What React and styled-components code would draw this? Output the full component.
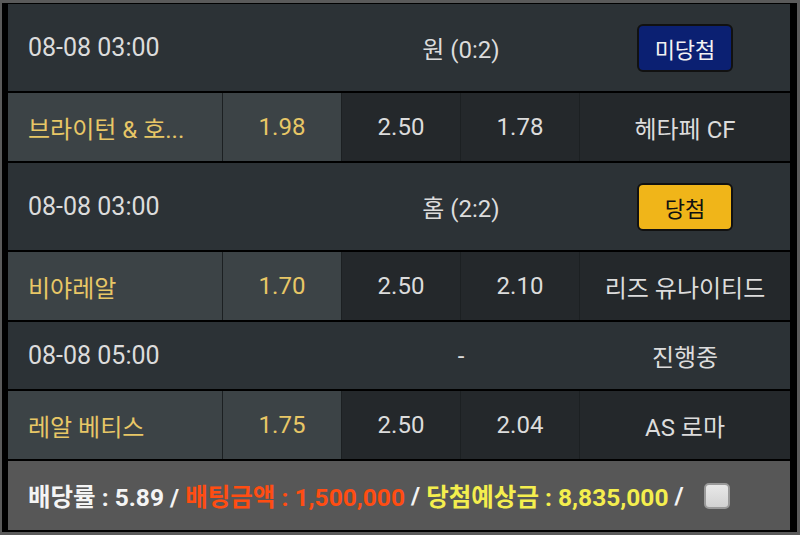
import React from "react";
import styled, { createGlobalStyle } from "styled-components";

const GlobalStyle = createGlobalStyle`
  body {
    margin: 0;
    background: #5a5a5a;
    font-family: Roboto, "Noto Sans CJK KR", sans-serif;
  }
`;

const Frame = styled.div`
  margin: 3px 3px 0 2px;
  padding: 1px 7px 2px 6px;
  background: #000;
  display: flex;
  flex-direction: column;
  gap: 2px;
`;

const InfoRow = styled.div`
  display: grid;
  grid-template-columns: 334px 238px 1fr;
  height: ${(p) => (p.$tall ? 87 : 67)}px;
  background: #2c3236;
  color: #dcdcdc;
  font-size: 24px;
  align-items: center;
`;

const DateCell = styled.div`
  padding-left: 20px;
  font-size: 25px;
`;

const ResultCell = styled.div`
  text-align: center;
`;

const StatusCell = styled.div`
  display: flex;
  justify-content: center;
  align-items: center;
`;

const Badge = styled.div`
  width: 96px;
  height: 48px;
  box-sizing: border-box;
  border: 2px solid #111;
  border-radius: 6px;
  display: flex;
  align-items: center;
  justify-content: center;
  font-size: 22px;
  background: ${(p) => (p.$win ? "#f0b519" : "#0b2072")};
  color: ${(p) => (p.$win ? "#111" : "#f2f2f2")};
`;

const TeamRow = styled.div`
  display: grid;
  grid-template-columns: 214px 118px 118px 118px 1fr;
  gap: 1px;
  height: 68px;
  background: #1c2022;
  font-size: 24px;
`;

const Cell = styled.div`
  display: flex;
  align-items: center;
  justify-content: ${(p) => (p.$left ? "flex-start" : "center")};
  padding: ${(p) => (p.$left ? "0 20px" : "0")};
  white-space: nowrap;
  overflow: hidden;
  background: ${(p) => (p.$home ? "#3c4346" : "#24282b")};
  color: ${(p) => (p.$home ? "#e8c766" : "#dcdcdc")};
`;

const Footer = styled.div`
  height: 69px;
  background: #575757;
  display: flex;
  align-items: center;
  padding-left: 20px;
  font-size: 24.5px;
  font-weight: 700;
  color: #f4f4f4;
  white-space: nowrap;
`;

const Bet = styled.span`
  color: #ff4d12;
`;

const Win = styled.span`
  color: #f4ee4e;
`;

const Square = styled.span`
  display: inline-block;
  width: 26px;
  height: 26px;
  margin-left: 20px;
  box-sizing: border-box;
  border: 2px solid #9a9a9a;
  border-radius: 5px;
  background: linear-gradient(#e8e8e8, #d2d2d2);
`;

const games = [
  {
    date: "08-08 03:00",
    result: "원 (0:2)",
    status: "미당첨",
    home: "브라이턴 & 호...",
    odds: ["1.98", "2.50", "1.78"],
    away: "헤타페 CF",
  },
  {
    date: "08-08 03:00",
    result: "홈 (2:2)",
    status: "당첨",
    home: "비야레알",
    odds: ["1.70", "2.50", "2.10"],
    away: "리즈 유나이티드",
  },
  {
    date: "08-08 05:00",
    result: "-",
    status: "진행중",
    home: "레알 베티스",
    odds: ["1.75", "2.50", "2.04"],
    away: "AS 로마",
  },
];

const StatusView = ({ status }) => {
  if (status === "당첨") return <Badge $win>{status}</Badge>;
  if (status === "미당첨") return <Badge>{status}</Badge>;
  return <span>{status}</span>;
};

export default function App() {
  return (
    <>
      <GlobalStyle />
      <Frame>
        {games.map((g, i) => (
          <React.Fragment key={i}>
            <InfoRow $tall={g.status !== "진행중"}>
              <DateCell>{g.date}</DateCell>
              <ResultCell>{g.result}</ResultCell>
              <StatusCell>
                <StatusView status={g.status} />
              </StatusCell>
            </InfoRow>
            <TeamRow>
              <Cell $home $left>
                {g.home}
              </Cell>
              <Cell $home>{g.odds[0]}</Cell>
              <Cell>{g.odds[1]}</Cell>
              <Cell>{g.odds[2]}</Cell>
              <Cell>{g.away}</Cell>
            </TeamRow>
          </React.Fragment>
        ))}
        <Footer>
          배당률 : 5.89 /&nbsp;<Bet>배팅금액 : 1,500,000</Bet>&nbsp;/&nbsp;
          <Win>당첨예상금 : 8,835,000</Win>&nbsp;/
          <Square />
        </Footer>
      </Frame>
    </>
  );
}
